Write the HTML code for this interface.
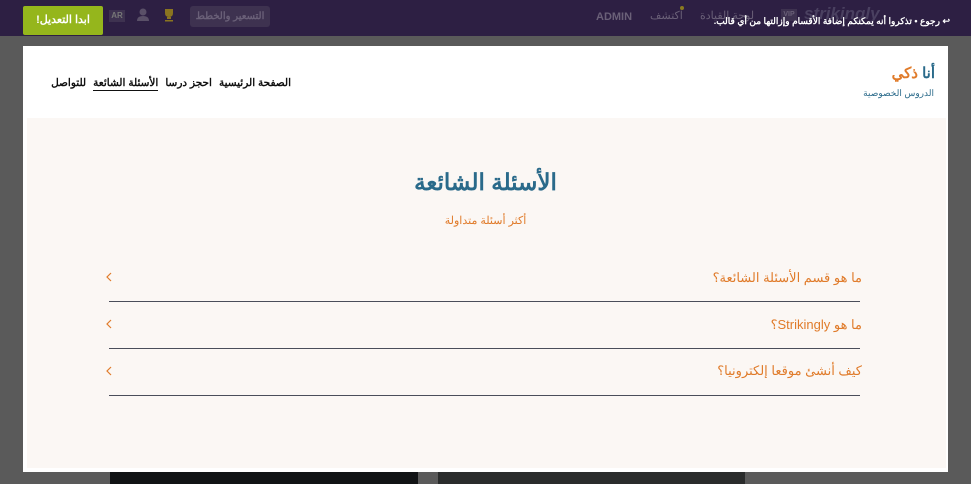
<!DOCTYPE html>
<html><head><meta charset="utf-8"><style>
*{margin:0;padding:0;box-sizing:border-box}
body{width:971px;height:484px;background:#5a5a5a;position:relative;overflow:hidden;font-family:"Liberation Sans","Noto Sans CJK SC",sans-serif}
.a{position:absolute}
.top{left:0;top:0;width:971px;height:36px;background:#2d1f43}
.t{white-space:nowrap;direction:rtl}
.nav span{margin-left:7px}
</style></head><body>
<div class="a top"></div>
<div class="a" style="left:23px;top:6px;width:80px;height:29px;background:#95b61c;border-radius:2px;color:#fff;font-size:11px;font-weight:bold;text-align:center;line-height:29px" dir="rtl">ابدا التعديل!</div>
<div class="a" style="left:109px;top:10px;width:16px;height:12px;background:#3e3250;color:#777;font-size:8px;font-weight:bold;text-align:center;line-height:12px">AR</div>
<svg class="a" style="left:136px;top:8px" width="14" height="14"><circle cx="7" cy="4" r="3.5" fill="#5a5068"/><path d="M1 13 Q1 8 7 8 Q13 8 13 13Z" fill="#5a5068"/></svg>
<svg class="a" style="left:162px;top:8px" width="14" height="14"><path d="M3 1h8v4q0 4-4 4q-4 0-4-4z M5 9h4v2H5z M3 12h8v1.5H3z" fill="#8a7420"/></svg>
<div class="a t" style="left:190px;top:6px;width:80px;height:21px;background:#3e3250;border-radius:3px;color:#6a6078;font-size:10px;font-weight:bold;text-align:center;line-height:21px">التسعير والخطط</div>
<div class="a" style="left:596px;top:11px;color:#6a6078;font-size:11px;font-weight:bold">ADMIN</div>
<div class="a t" style="left:650px;top:9px;color:#6a6078;font-size:11px">اكتشف</div>
<div class="a" style="left:680px;top:6px;width:4px;height:4px;border-radius:2px;background:#8a7a20"></div>
<div class="a t" style="left:700px;top:9px;color:#6a6078;font-size:11px">لوحة القيادة</div>
<div class="a" style="left:781px;top:9px;width:16px;height:12px;background:#3e3250;color:#6a6078;font-size:7px;font-weight:bold;text-align:center;line-height:12px">VIP</div>
<div class="a" style="left:804px;top:4px;color:#4a4060;font-size:17px;font-weight:bold;font-style:italic">strikingly</div>
<div class="a t" style="right:21px;top:16px;color:#fff;font-size:9px;font-weight:bold">↩ رجوع • تذكروا أنه يمكنكم إضافة الأقسام وإزالتها من أي قالب.</div>
<div class="a" style="left:23px;top:46px;width:925px;height:426px;background:#fff"></div>
<div class="a" style="left:27px;top:118px;width:919px;height:350px;background:#fbf7f4"></div>
<div class="a t" style="right:36px;top:64px;font-size:15px;font-weight:bold;color:#2a6a8a">أنا <span style="color:#e07b2a">ذكي</span></div>
<div class="a t" style="right:37px;top:88px;font-size:9px;color:#2a6a8a">الدروس الخصوصية</div>
<div class="a t nav" style="right:680px;top:77px;font-size:10.5px;font-weight:bold;color:#111"><span>الصفحة الرئيسية</span><span>احجز درسا</span><span style="border-bottom:1px solid #111;padding-bottom:1px">الأسئلة الشائعة</span><span style="margin:0">للتواصل</span></div>
<div class="a t" style="left:0;width:971px;text-align:center;top:169px;font-size:23px;font-weight:bold;color:#2a6a8a">الأسئلة الشائعة</div>
<div class="a t" style="left:0;width:971px;text-align:center;top:214px;font-size:11px;color:#e07b2a">أكثر أسئلة متداولة</div>
<div class="a t" style="right:109px;top:270px;font-size:13px;color:#e07b2a">ما هو قسم الأسئلة الشائعة؟</div>
<div class="a t" style="right:109px;top:317px;font-size:13px;color:#e07b2a">ما هو Strikingly؟</div>
<div class="a t" style="right:109px;top:363px;font-size:13px;color:#e07b2a">كيف أنشئ موقعا إلكترونيا؟</div>
<svg class="a" style="left:105px;top:272px" width="8" height="10"><path d="M6 1L2 5L6 9" fill="none" stroke="#e07b2a" stroke-width="1.2"/></svg>
<svg class="a" style="left:105px;top:319px" width="8" height="10"><path d="M6 1L2 5L6 9" fill="none" stroke="#e07b2a" stroke-width="1.2"/></svg>
<svg class="a" style="left:105px;top:366px" width="8" height="10"><path d="M6 1L2 5L6 9" fill="none" stroke="#e07b2a" stroke-width="1.2"/></svg>
<div class="a" style="left:109px;top:301px;width:751px;height:1px;background:#4a4d5a"></div>
<div class="a" style="left:109px;top:348px;width:751px;height:1px;background:#4a4d5a"></div>
<div class="a" style="left:109px;top:395px;width:751px;height:1px;background:#4a4d5a"></div>
<div class="a" style="left:110px;top:472px;width:308px;height:12px;background:#111315"></div>
<div class="a" style="left:438px;top:472px;width:307px;height:12px;background:#2a2c2c"></div>
</body></html>
